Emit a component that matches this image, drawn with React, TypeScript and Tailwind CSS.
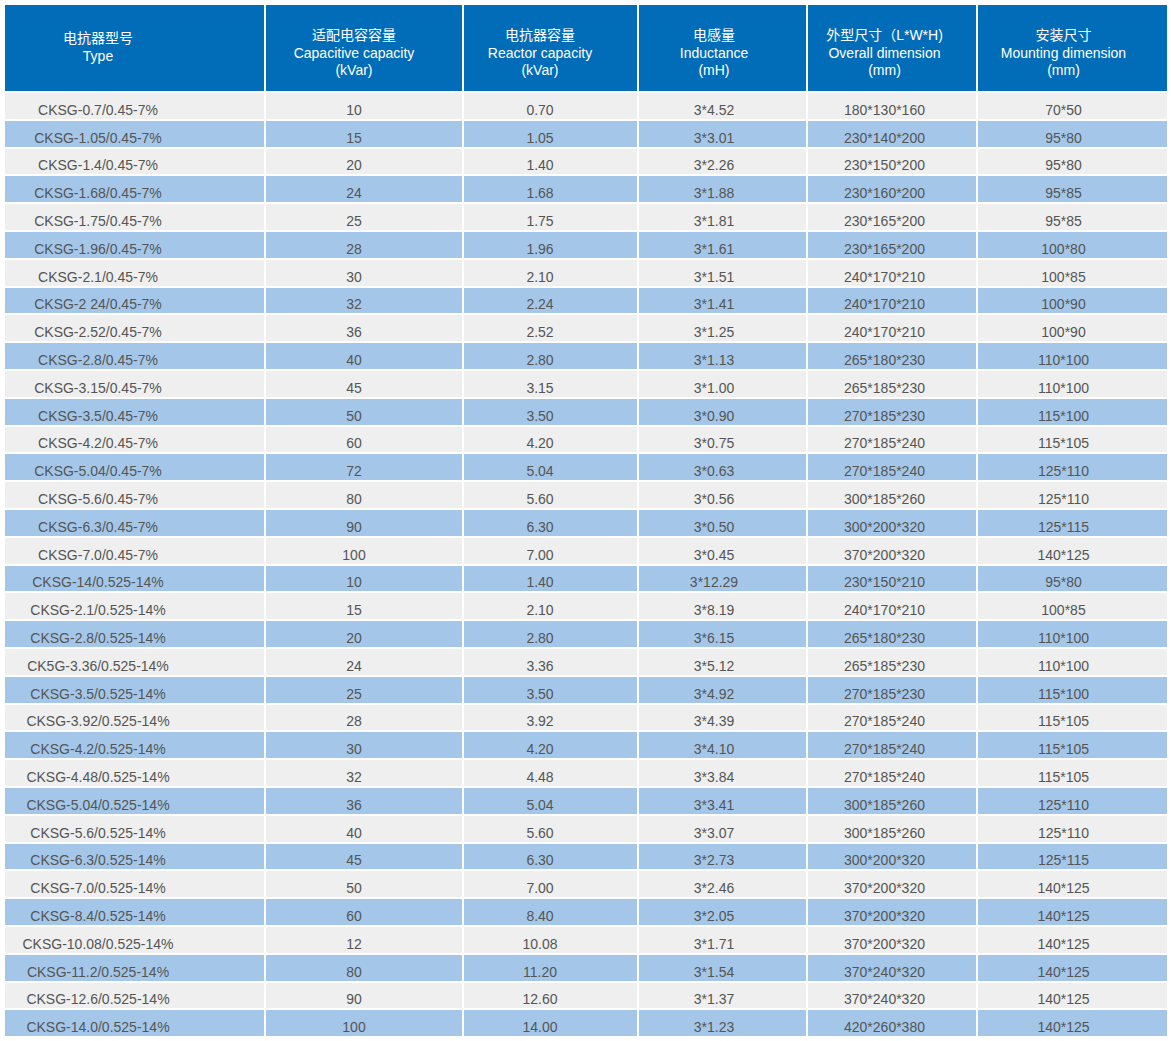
const rows: string[][] = [
  ['CKSG-0.7/0.45-7%', '10', '0.70', '3*4.52', '180*130*160', '70*50'],
  ['CKSG-1.05/0.45-7%', '15', '1.05', '3*3.01', '230*140*200', '95*80'],
  ['CKSG-1.4/0.45-7%', '20', '1.40', '3*2.26', '230*150*200', '95*80'],
  ['CKSG-1.68/0.45-7%', '24', '1.68', '3*1.88', '230*160*200', '95*85'],
  ['CKSG-1.75/0.45-7%', '25', '1.75', '3*1.81', '230*165*200', '95*85'],
  ['CKSG-1.96/0.45-7%', '28', '1.96', '3*1.61', '230*165*200', '100*80'],
  ['CKSG-2.1/0.45-7%', '30', '2.10', '3*1.51', '240*170*210', '100*85'],
  ['CKSG-2 24/0.45-7%', '32', '2.24', '3*1.41', '240*170*210', '100*90'],
  ['CKSG-2.52/0.45-7%', '36', '2.52', '3*1.25', '240*170*210', '100*90'],
  ['CKSG-2.8/0.45-7%', '40', '2.80', '3*1.13', '265*180*230', '110*100'],
  ['CKSG-3.15/0.45-7%', '45', '3.15', '3*1.00', '265*185*230', '110*100'],
  ['CKSG-3.5/0.45-7%', '50', '3.50', '3*0.90', '270*185*230', '115*100'],
  ['CKSG-4.2/0.45-7%', '60', '4.20', '3*0.75', '270*185*240', '115*105'],
  ['CKSG-5.04/0.45-7%', '72', '5.04', '3*0.63', '270*185*240', '125*110'],
  ['CKSG-5.6/0.45-7%', '80', '5.60', '3*0.56', '300*185*260', '125*110'],
  ['CKSG-6.3/0.45-7%', '90', '6.30', '3*0.50', '300*200*320', '125*115'],
  ['CKSG-7.0/0.45-7%', '100', '7.00', '3*0.45', '370*200*320', '140*125'],
  ['CKSG-14/0.525-14%', '10', '1.40', '3*12.29', '230*150*210', '95*80'],
  ['CKSG-2.1/0.525-14%', '15', '2.10', '3*8.19', '240*170*210', '100*85'],
  ['CKSG-2.8/0.525-14%', '20', '2.80', '3*6.15', '265*180*230', '110*100'],
  ['CK5G-3.36/0.525-14%', '24', '3.36', '3*5.12', '265*185*230', '110*100'],
  ['CKSG-3.5/0.525-14%', '25', '3.50', '3*4.92', '270*185*230', '115*100'],
  ['CKSG-3.92/0.525-14%', '28', '3.92', '3*4.39', '270*185*240', '115*105'],
  ['CKSG-4.2/0.525-14%', '30', '4.20', '3*4.10', '270*185*240', '115*105'],
  ['CKSG-4.48/0.525-14%', '32', '4.48', '3*3.84', '270*185*240', '115*105'],
  ['CKSG-5.04/0.525-14%', '36', '5.04', '3*3.41', '300*185*260', '125*110'],
  ['CKSG-5.6/0.525-14%', '40', '5.60', '3*3.07', '300*185*260', '125*110'],
  ['CKSG-6.3/0.525-14%', '45', '6.30', '3*2.73', '300*200*320', '125*115'],
  ['CKSG-7.0/0.525-14%', '50', '7.00', '3*2.46', '370*200*320', '140*125'],
  ['CKSG-8.4/0.525-14%', '60', '8.40', '3*2.05', '370*200*320', '140*125'],
  ['CKSG-10.08/0.525-14%', '12', '10.08', '3*1.71', '370*200*320', '140*125'],
  ['CKSG-11.2/0.525-14%', '80', '11.20', '3*1.54', '370*240*320', '140*125'],
  ['CKSG-12.6/0.525-14%', '90', '12.60', '3*1.37', '370*240*320', '140*125'],
  ['CKSG-14.0/0.525-14%', '100', '14.00', '3*1.23', '420*260*380', '140*125'],
];

const headers = [
  { cn: '电抗器型号', en: ['Type'] },
  { cn: '适配电容容量', en: ['Capacitive capacity', '(kVar)'] },
  { cn: '电抗器容量', en: ['Reactor capacity', '(kVar)'] },
  { cn: '电感量', en: ['Inductance', '(mH)'] },
  { cn: '外型尺寸（L*W*H)', en: ['Overall dimension', '(mm)'] },
  { cn: '安装尺寸', en: ['Mounting dimension', '(mm)'] },
];

// padding-right per column, the source centres text a bit left of the cell middle
const pads = ['pr-[73px]', 'pr-[20px]', 'pr-[21px]', 'pr-[17px]', 'pr-[15px]', 'pr-[18px]'];
const widths = ['w-[259px]', 'w-[196px]', 'w-[173px]', 'w-[167px]', 'w-[168px]', 'w-[189px]'];

export default function App() {
  return (
    <div className="bg-white min-h-[1041px] p-[3px] font-['Liberation_Sans','Noto_Sans_CJK_SC',sans-serif]">
      <table className="table-fixed border-separate border-spacing-[2px] w-[1166px]">
        <colgroup>
          {widths.map((w, i) => (
            <col key={i} className={w} />
          ))}
        </colgroup>
        <thead>
          <tr className="h-[86px]">
            {headers.map((h, i) => (
              <th
                key={i}
                className={`bg-[#016cb7] text-white font-normal text-[14px] leading-[17.5px] align-top text-center ${pads[i]} ${i === 0 ? 'pt-[25px]' : 'pt-[22px]'}`}
              >
                <div>{h.cn}</div>
                {h.en.map((t) => (
                  <div key={t}>{t}</div>
                ))}
              </th>
            ))}
          </tr>
        </thead>
        <tbody>
          {rows.map((r, ri) => (
            <tr key={ri} className="h-[25.8px]">
              {r.map((c, ci) => (
                <td
                  key={ci}
                  className={`${ri % 2 === 0 ? 'bg-[#eeefee]' : 'bg-[#a4c7e9]'} text-[#555] text-[14px] leading-[16px] align-bottom text-center pb-[1px] pt-0 whitespace-nowrap ${pads[ci]}`}
                >
                  {c}
                </td>
              ))}
            </tr>
          ))}
        </tbody>
      </table>
    </div>
  );
}
